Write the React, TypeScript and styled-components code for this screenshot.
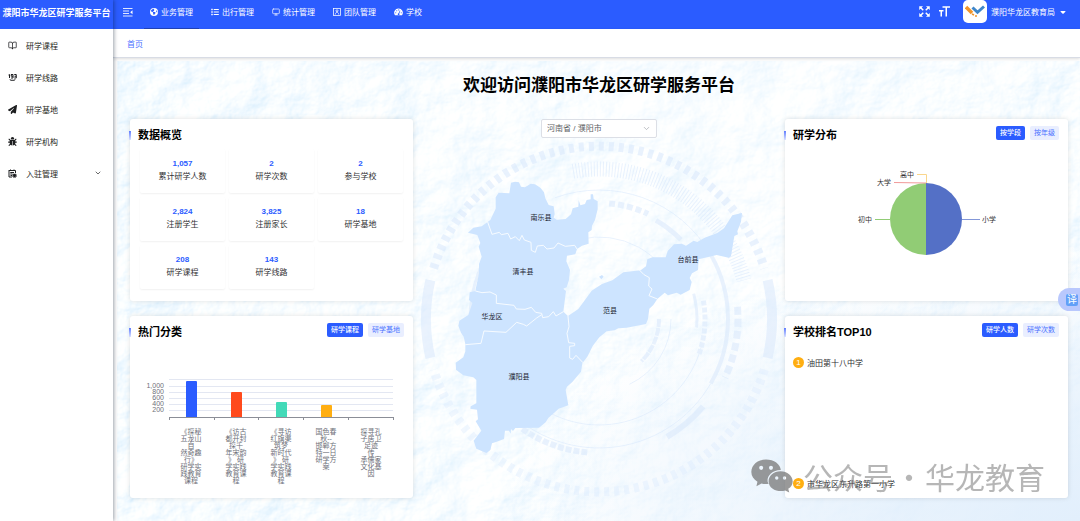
import React from 'react';
import styled, { createGlobalStyle, css } from 'styled-components';
import { BookOpen, ChevronDown, Monitor } from 'lucide-react';
import { FaBug, FaCaretDown, FaEarthAmericas, FaList, FaPaperPlane } from 'react-icons/fa6';

const BLUE = '#2b5cff';

const GlobalStyle = createGlobalStyle`
  *, *::before, *::after { box-sizing: border-box; }
  html, body { margin: 0; padding: 0; }
  body {
    font-family: "Liberation Sans", "Noto Sans CJK SC", sans-serif;
    font-size: 8px;
    color: #303133;
    background: #fff;
  }
  button, select { font-family: inherit; margin: 0; }
  h1, h2, ul, ol, dl, dd, p { margin: 0; padding: 0; list-style: none; }
  a { color: inherit; text-decoration: none; }
`;

/* ---------- frame ---------- */

const Page = styled.div`
  display: grid;
  grid-template-columns: 113px minmax(0, 1fr);
  min-height: 100vh;
`;

const Sidebar = styled.aside`
  position: relative;
  z-index: 2;
  background: #fff;
  box-shadow: 1px 0 4px rgba(0, 21, 41, 0.4);
`;

const Brand = styled.div`
  height: 29px;
  padding-bottom: 5px;
  display: flex;
  align-items: center;
  justify-content: center;
  background: ${BLUE};
  color: #fff;
  font-size: 9px;
  font-weight: 700;
  white-space: nowrap;
`;

const SideLink = styled.a`
  display: flex;
  align-items: center;
  gap: 9px;
  height: 32px;
  padding: 0 11px 0 8px;
  color: #1d1e20;
  span { flex: 1; }
`;

const Main = styled.div`
  display: flex;
  flex-direction: column;
  min-width: 0;
`;

const TopBar = styled.header`
  display: flex;
  justify-content: space-between;
  height: 29px;
  padding: 0 12px 0 10px;
  background: ${BLUE};
  color: #fff;
`;

const TopGroup = styled.div<{ $gap: number }>`
  display: flex;
  align-items: center;
  gap: ${(p) => p.$gap}px;
  height: 23px;
`;

const IconButton = styled.button`
  display: flex;
  padding: 0;
  border: 0;
  background: none;
  color: inherit;
`;

const TopNav = styled.nav`
  display: flex;
  gap: 6px;
  height: 29px;
  margin-left: 11px;
  align-self: flex-start;
`;

const TopLink = styled.a<{ $active?: boolean }>`
  display: flex;
  align-items: center;
  gap: 3px;
  padding: 0 6px 5px;
  border-bottom: 1px solid ${(p) => (p.$active ? '#2143b9' : 'transparent')};
`;

const Avatar = styled.span`
  display: flex;
  align-items: center;
  justify-content: center;
  width: 24px;
  height: 23px;
  border-radius: 5px;
  background: #fff;
`;

const UserButton = styled.button`
  display: flex;
  align-items: center;
  gap: 4px;
  margin-left: 4px;
  padding: 0 1px 0 0;
  border: 0;
  background: none;
  color: #fff;
  font-size: 8px;
`;

const Crumbs = styled.nav`
  position: relative;
  z-index: 1;
  display: flex;
  align-items: center;
  height: 29px;
  padding: 0 14px;
  background: #fff;
  color: #4a72ff;
  border-bottom: 1px solid #d8dce5;
  box-shadow: 0 1px 3px rgba(0, 0, 0, 0.14);
`;

const Board = styled.main`
  position: relative;
  flex: 1;
  margin: 3px 0 0 4px;
  padding: 12px 12px 23px 13px;
  background: #f8fbff;
  overflow: hidden;
`;

const Terrain = styled.svg`
  position: absolute;
  inset: 0;
  width: 100%;
  height: 100%;
`;

const Headline = styled.h1`
  position: relative;
  height: 46px;
  line-height: 26px;
  font-size: 17px;
  font-weight: 700;
  color: #000;
  text-align: center;
`;

const Columns = styled.div`
  position: relative;
  display: grid;
  grid-template-columns: minmax(0, 283fr) minmax(0, 372fr) minmax(0, 283fr);
`;

const Column = styled.div`
  display: flex;
  flex-direction: column;
  gap: 15px;
`;

/* ---------- cards ---------- */

const Card = styled.section`
  min-height: 182px;
  border-radius: 3px;
  background: #fff;
  box-shadow: 0 0 5px rgba(0, 0, 0, 0.12);
`;

const CardHead = styled.div`
  display: flex;
  align-items: flex-start;
  height: 30px;
  padding: 7px 9px 0 0;
`;

const CardMark = styled.span`
  width: 2px;
  height: 9px;
  margin: 5px 7px 0 -1px;
  background: linear-gradient(160deg, #5b79ff, #dfe5ff);
`;

const CardTitle = styled.h2`
  flex: 1;
  line-height: 18px;
  font-size: 11px;
  font-weight: 700;
  color: #000;
`;

const Tabs = styled.div`
  display: flex;
  gap: 5px;
`;

const Tab = styled.button<{ $on?: boolean }>`
  height: 14px;
  padding: 0 4px;
  border: 0;
  border-radius: 2px;
  line-height: 14px;
  font-size: 7px;
  ${(p) =>
    p.$on
      ? css`background: ${BLUE}; color: #fff; font-weight: 500;`
      : css`background: #e9eeff; color: #4a72ff;`}
`;

const Stats = styled.dl`
  display: grid;
  grid-template-columns: repeat(3, minmax(0, 1fr));
  gap: 4px;
  padding: 0 10px;
`;

const Stat = styled.div`
  display: flex;
  flex-direction: column-reverse;
  justify-content: flex-end;
  height: 44px;
  padding-top: 8px;
  border-radius: 2px;
  text-align: center;
  line-height: 13px;
  box-shadow: 0 1px 2px rgba(0, 0, 0, 0.06);
  dd { color: ${BLUE}; font-weight: 700; }
`;

const Chart = styled.svg`
  display: block;
  width: 100%;
  height: auto;
  font-size: 7px;
`;

const Ranks = styled.ol`
  display: flex;
  flex-direction: column;
  gap: 109px;
  padding: 10px 8px 0;
`;

const Rank = styled.li`
  display: flex;
  align-items: center;
  gap: 3px;
  height: 12px;
`;

const RankBadge = styled.span`
  width: 11px;
  height: 11px;
  border-radius: 50%;
  background: #ffae11;
  color: #fff;
  text-align: center;
  line-height: 11px;
  font-size: 8px;
`;

/* ---------- centre ---------- */

const Centre = styled.div`
  display: flex;
  flex-direction: column;
  align-items: center;
`;

const SelectWrap = styled.label`
  position: relative;
  display: block;
  width: 116px;
  height: 19px;
  svg { position: absolute; right: 6px; top: 5px; color: #a8abb2; pointer-events: none; }
`;

const Select = styled.select`
  appearance: none;
  width: 100%;
  height: 100%;
  padding: 0 16px 0 5px;
  border: 1px solid #dcdfe6;
  border-radius: 2px;
  background: #fff;
  color: #606266;
  font-size: 8px;
`;

/* ---------- floating layers ---------- */

const TranslateButton = styled.button`
  position: fixed;
  right: 0;
  top: 288px;
  z-index: 3;
  width: 22px;
  height: 23px;
  padding: 0 2px 0 8px;
  border: 0;
  border-radius: 12px 0 0 12px;
  background: #b9c8fd;
  span {
    display: block;
    height: 12px;
    border-radius: 2px;
    background: #62a0f8;
    color: #fff;
    line-height: 12px;
    font-size: 10px;
  }
`;

const Watermark = styled.div`
  position: fixed;
  right: 35px;
  bottom: 24px;
  z-index: 4;
  display: flex;
  align-items: center;
  gap: 1px;
  color: rgba(110, 110, 110, 0.5);
  font-family: "Noto Sans CJK SC", sans-serif;
  font-size: 30px;
  line-height: 42px;
  pointer-events: none;
  svg { margin-right: 9px; }
`;

/* ---------- icons ---------- */

const CollapseIcon = () => (
  <svg width="10" height="10" viewBox="0 0 10 10" stroke="#fff" fill="none" strokeWidth="1">
    <path d="M0 1.5H9.5M0 4H6M0 6.5H6M0 9H9.5" opacity=".85" />
    <path d="M9.5 3.2L7.2 5.2L9.5 7.2Z" fill="#fff" stroke="none" />
  </svg>
);

const CounterIcon = () => (
  <svg width="9" height="9" viewBox="0 0 18 18" fill="none" stroke="#1d1e20" strokeWidth="2">
    <path d="M1 4L3 3V10M6 3H10V6.5H6.5V3M10 6V10H6M12.5 3H16.5V10H12.5M13 6.5H16.5M4 12.5L5 14.500H13L14 12.500" />
  </svg>
);

const EnrolIcon = () => (
  <svg width="9" height="9" viewBox="0 0 18 18" fill="none" stroke="#1d1e20" strokeWidth="2">
    <path d="M2 3H15V8M2 2V16H8M5 1V4M12 1V4M4.500 7H12M4.500 10H9M5 13H8M10 10.500H16V16H10ZM13 10V16M10 13.200H16" />
  </svg>
);

const TeamIcon = () => (
  <svg width="8" height="8" viewBox="0 0 16 16" fill="none" stroke="#fff" strokeWidth="1.500">
    <rect x="1" y="1" width="14" height="14" />
    <circle cx="8" cy="5.500" r="2" />
    <path d="M4.500 13C5 9.500 7 8.500 8 8.500S11 9.500 11.500 13" />
  </svg>
);

const GaugeIcon = () => (
  <svg width="9" height="8" viewBox="0 0 18 16">
    <path d="M9 1A8.500 8.500 0 0 0 2 14.500H16A8.500 8.500 0 0 0 9 1Z" fill="#fff" />
    <g fill={BLUE}>
      <circle cx="3.500" cy="9.500" r="1.100" />
      <circle cx="5.500" cy="5.500" r="1.100" />
      <circle cx="9.500" cy="3.800" r="1.100" />
      <circle cx="14.500" cy="9.500" r="1.100" />
      <path d="M11.800 5L12.800 5.500L10.500 11A1.800 1.800 0 1 1 9 10.500Z" />
    </g>
  </svg>
);

const FullscreenIcon = () => (
  <svg width="11" height="11" viewBox="0 0 22 22" fill="#fff" stroke="#fff">
    <path d="M1 1H7L1 7ZM21 1V7L15 1ZM1 21V15L7 21ZM21 21H15L21 15Z" strokeWidth="1" />
    <path d="M3 3L8.500 8.500M19 3L13.500 8.500M3 19L8.500 13.500M19 19L13.500 13.500" strokeWidth="3" />
  </svg>
);

const FontSizeIcon = () => (
  <svg width="11" height="11" viewBox="0 0 22 22" fill="none" stroke="#fff" strokeWidth="3">
    <path d="M7 2H22M14.500 2V21M0 9.500H9M4.500 9.500V21" />
  </svg>
);

const LogoMark = () => (
  <svg width="20" height="13" viewBox="0 0 40 26" fill="none">
    <path d="M2 4L14 16" stroke="#f0952b" strokeWidth="7" />
    <path d="M15 5L25 14.500L38 3" stroke="#3f86c9" strokeWidth="6" />
    <path d="M14 18L18 20" stroke="#f0952b" strokeWidth="3" />
    <circle cx="22" cy="22" r="2" fill="#f0952b" />
  </svg>
);

const WeChatMark = () => (
  <svg width="42" height="34" viewBox="0 0 124 100" fill="#777" fillOpacity=".75">
    <path
      fillRule="evenodd"
      d="M44 1C68 1 87 15 88 32C64 33 47 47 49 66C50 69 51 71 52 73C46 74 37 74 31 72L16 80L19 67C8 60 1 50 1 38C1 17 20 1 44 1ZM30 20A6 6 0 1 0 30 32A6 6 0 1 0 30 20ZM59 20A6 6 0 1 0 59 32A6 6 0 1 0 59 20Z"
    />
    <path
      fillRule="evenodd"
      d="M87 36C107 36 123 49 123 66C123 76 118 83 110 88L113 99L101 93C78 99 52 87 52 66C52 49 67 36 87 36ZM76 51A5 5 0 1 0 76 61A5 5 0 1 0 76 51ZM99 51A5 5 0 1 0 99 61A5 5 0 1 0 99 51Z"
    />
  </svg>
);

/* ---------- data ---------- */

const sideItems = [
  { label: '研学课程', icon: <BookOpen size={9} strokeWidth={2} /> },
  { label: '研学线路', icon: <CounterIcon /> },
  { label: '研学基地', icon: <FaPaperPlane size={9} /> },
  { label: '研学机构', icon: <FaBug size={9} /> },
  { label: '入驻管理', icon: <EnrolIcon />, open: true },
];

const topItems = [
  { label: '业务管理', icon: <FaEarthAmericas size={8} />, active: true },
  { label: '出行管理', icon: <FaList size={8} /> },
  { label: '统计管理', icon: <Monitor size={8} strokeWidth={2} /> },
  { label: '团队管理', icon: <TeamIcon /> },
  { label: '学校', icon: <GaugeIcon /> },
];

const stats = [
  ['1,057', '累计研学人数'],
  ['2', '研学次数'],
  ['2', '参与学校'],
  ['2,824', '注册学生'],
  ['3,825', '注册家长'],
  ['18', '研学基地'],
  ['208', '研学课程'],
  ['143', '研学线路'],
];

const bars = [
  { top: 35, color: BLUE, lines: ['《探秘', '五龙山', '自', '然奇趣', '行》', '研学实', '践教育', '课程'] },
  { top: 46, color: '#ff4a1c', lines: ['《访古', '都开封', '探千', '年宋韵', '》 研', '学实践', '教育课', '程'] },
  { top: 56, color: '#42dab8', lines: ['《寻访', '红旗渠', '筑梦', '新时代', '》 研', '学实践', '教育课', '程'] },
  { top: 59, color: '#ffae11', lines: ['国色春', '秋--', '邯郸方', '特一日', '研学方', '案'] },
  { top: 71, color: BLUE, lines: ['探寻孔', '子居卫', '足迹', '传', '承儒家', '文化基', '因'] },
];

const counties = [
  { name: '南乐县', x: 128, y: 82 },
  { name: '清丰县', x: 110, y: 136 },
  { name: '华龙区', x: 79, y: 181 },
  { name: '濮阳县', x: 106, y: 241 },
  { name: '范县', x: 197, y: 175 },
  { name: '台前县', x: 275, y: 124 },
];

/* ---------- drawings ---------- */

const polar = (r: number, deg: number) => {
  const a = (deg * Math.PI) / 180;
  return `${(482 + r * Math.cos(a)).toFixed(1)} ${(258 + r * Math.sin(a)).toFixed(1)}`;
};

const arc = (r: number, from: number, to: number) =>
  `M${polar(r, from)}A${r} ${r} 0 ${to - from > 180 ? 1 : 0} 1 ${polar(r, to)}`;

const Backdrop = () => (
  <Terrain viewBox="0 0 963 460" preserveAspectRatio="xMidYMid slice" aria-hidden="true">
    <defs>
      <filter id="relief" x="0" y="0" width="100%" height="100%" colorInterpolationFilters="sRGB">
        <feTurbulence type="fractalNoise" baseFrequency="0.014 0.018" numOctaves="6" seed="4" />
        <feDiffuseLighting surfaceScale="8" lightingColor="#fff" result="lit">
          <feDistantLight azimuth="215" elevation="58" />
        </feDiffuseLighting>
        <feColorMatrix values="0.3 0 0 0 0.715  0 0.14 0 0 0.872  0 0 0.02 0 0.985  0 0 0 0 1" />
      </filter>
      <linearGradient id="veil" x1="0" y1="0" x2="1" y2="0">
        <stop offset="0" stopColor="#fff" stopOpacity="0" />
        <stop offset="0.3" stopColor="#fff" stopOpacity="0.2" />
        <stop offset="0.6" stopColor="#fff" stopOpacity="0.4" />
        <stop offset="1" stopColor="#fff" stopOpacity="0.2" />
      </linearGradient>
      <radialGradient id="glow" cx="1" cy="1" r="0.6">
        <stop offset="0" stopColor="#e2effc" />
        <stop offset="0.4" stopColor="#e4f0fc" stopOpacity="0.8" />
        <stop offset="1" stopColor="#e4f0fc" stopOpacity="0" />
      </radialGradient>
    </defs>
    <rect width="963" height="460" filter="url(#relief)" />
    <rect width="963" height="460" fill="url(#veil)" />
    <rect width="963" height="460" fill="url(#glow)" />
    <g fill="none" stroke="#d9e8fc" opacity=".55">
      <path d={arc(173, 17, 163)} strokeWidth="9" strokeDasharray="5 5" opacity=".7" />
      <path d={arc(173, 197, 343)} strokeWidth="9" strokeDasharray="5 5" />
      <path d={arc(173, -13, 13)} strokeWidth="10" />
      <path d={arc(173, 167, 193)} strokeWidth="10" />
      <path d={arc(150, 260, 345)} strokeWidth="15" strokeDasharray="1 2" />
      <path d={arc(129, 250, 330)} strokeWidth="1" />
      <path d={arc(129, 330, 390)} strokeWidth="4" />
      <path d={arc(129, 390, 500)} strokeWidth="1" />
      <path d={arc(129, 165, 215)} strokeWidth="3" />
      <path d={arc(116, 275, 295)} strokeWidth="6" strokeDasharray="6 3" />
      <path d={arc(114, 300, 316)} strokeWidth="5" />
      <path d={arc(139, -5, 25)} strokeWidth="7" strokeDasharray="8 4" />
      <path d={arc(106, -10, 20)} strokeWidth="5" strokeDasharray="5 2" />
      <path d={arc(98, -15, 5)} strokeWidth="3" />
      <path d={arc(106, 15, 130)} strokeWidth="1" />
      <path d={arc(82, 235, 320)} strokeWidth="1" />
      <path d={arc(72, 0, 65)} strokeWidth="1" />
      <path d={arc(60, 0, 45)} strokeWidth="4" strokeDasharray="8 1" />
      <path d={arc(136, 40, 60)} strokeWidth="6" />
      <path d={arc(134, 95, 125)} strokeWidth="6" strokeDasharray="6 2" />
    </g>
  </Terrain>
);

const CountyMap = () => (
  <Chart viewBox="0 0 372 350" role="img" aria-label="濮阳市地图">
    <g transform="translate(-3 -78) scale(0.33333)" fill="#cde4ff" strokeLinejoin="round">
      <path d="M303 368L315 365L327 367L333 380L345 382L362 371L375 373L391 383L402 397L406 415L416 435L431 439L434 462L431 473L440 479L467 477L483 463L488 445L505 440L506 420L511 436L525 432L530 420L542 418L542 403L549 403L551 417L563 424L563 448L555 480L546 497L545 510L535 517L536 551L516 557L501 567L496 583L471 587L469 604L480 630L477 660L470 682L460 686L468 693L460 755L474 768L505 747L545 692L576 672L607 661L640 637L672 633L692 631L708 619L712 598L727 592L767 592L773 573L792 553L815 551L828 557L851 542L862 546L884 533L922 519L942 505L967 466L996 459L993 485L982 514L984 523L973 528L963 589L956 593L920 585L866 598L864 630L846 640L839 654L845 666L839 690L812 704L800 698L774 706L764 698L742 717L730 735L718 746L714 777L708 792L650 803L625 805L614 811L590 814L568 832L548 858L532 890L517 910L513 935L494 958L487 966L471 980L467 990L475 1036L446 1046L415 1074L407 1087L387 1103L316 1104L309 1113L303 1107L302 1121L297 1112L285 1112L282 1137L258 1146L246 1150L241 1170L229 1179L199 1166L191 1142L214 1112L197 1084L204 1078L201 1049L181 1046L182 1039L199 1030L199 960L190 952L160 946L138 929L137 908L160 892L166 874L166 852L161 830L153 818L145 797L148 782L175 765L187 729L177 720L179 697L196 693L207 640L207 612L215 590L206 560L211 549L202 525L174 518L190 503L215 499L241 480L257 446L257 412L266 398L298 400Z" />
      <path d="M567 650L576 645L581 650L574 658Z" />
      <g fill="none" stroke="#f7fbff" strokeWidth="3">
        <path d="M233 486L246 523L268 517L274 524L294 520L302 537L316 530L328 542L336 526L343 540L363 547L364 571L376 577L382 558L400 556L411 567L432 564L444 549L466 559L494 556L501 567" />
        <path d="M196 693L216 698L240 696L259 705L259 730L312 736L319 747L345 748L364 742L377 757L395 760L398 773L416 770L430 755L438 768L460 755" />
        <path d="M395 764L380 774L350 798L340 793L320 787L288 817L222 813L213 850L166 854" />
        <path d="M474 768L477 800L471 820L476 848L494 850L494 857L479 859L479 894L488 898L498 886L519 908" />
        <path d="M688 630L702 644L718 653L716 678L726 687L717 707L742 717" />
      </g>
    </g>
    <g textAnchor="middle" fill="#1f2733">
      {counties.map((c) => (
        <text key={c.name} x={c.x} y={c.y}>{c.name}</text>
      ))}
    </g>
  </Chart>
);

const BarChart = () => (
  <Chart viewBox="0 0 283 148" role="img" aria-label="热门分类">
    <g stroke="#e3e7f2">
      {[33, 40, 46, 52, 58, 64].map((y) => (
        <path key={y} d={`M39 ${y}.5H263`} />
      ))}
    </g>
    <g fill="#6e7079" textAnchor="end">
      {['1,000', '800', '600', '400', '200'].map((v, i) => (
        <text key={v} x="34" y={42 + i * 6}>{v}</text>
      ))}
    </g>
    {bars.map((b, i) => (
      <g key={b.lines[0]}>
        <path d={`M${56 + i * 45} 71V${b.top + 1}q0 -1 1 -1h9q1 0 1 1V71Z`} fill={b.color} />
        <text textAnchor="middle" fill="#6e7079">
          {b.lines.map((line, n) => (
            <tspan key={n} x={61 + i * 45} y={88 + n * 7}>{line}</tspan>
          ))}
        </text>
      </g>
    ))}
    <path
      d="M39.5 74V71.5M84.500 74V71.5M128.500 74V71.5M173.500 74V71.5M218.500 74V71.5M263.500 74V71.5M39 71.5H264"
      stroke="#8b8e97"
      fill="none"
    />
  </Chart>
);

const PieChart = () => (
  <Chart viewBox="0 0 283 148" role="img" aria-label="研学分布">
    <path d="M141 34A36 36 0 0 1 141 106Z" fill="#5470c6" />
    <path d="M141 106A36 36 0 0 1 141 34Z" fill="#91cc75" />
    <g fill="none">
      <path d="M177 70.5H195" stroke="#8397d8" />
      <path d="M90 70.5H105" stroke="#91cc75" />
      <path d="M109 33.500L141 34" stroke="#f19a9a" />
      <path d="M132 25.500H141.500V34" stroke="#fad68c" />
    </g>
    <g fill="#333">
      <text x="197" y="73">小学</text>
      <text x="73" y="73">初中</text>
      <text x="92" y="36">大学</text>
      <text x="115" y="28">高中</text>
    </g>
  </Chart>
);

type PanelProps = { title: string; tabs?: string[]; children: React.ReactNode };

const Panel = ({ title, tabs, children }: PanelProps) => (
  <Card>
    <CardHead>
      <CardMark />
      <CardTitle>{title}</CardTitle>
      {tabs && (
        <Tabs>
          {tabs.map((t, i) => (
            <Tab key={t} type="button" $on={i === 0}>{t}</Tab>
          ))}
        </Tabs>
      )}
    </CardHead>
    {children}
  </Card>
);

export default function App() {
  return (
    <>
      <GlobalStyle />
      <Page>
        <Sidebar>
          <Brand>濮阳市华龙区研学服务平台</Brand>
          <ul>
            {sideItems.map((s) => (
              <li key={s.label}>
                <SideLink href="#">
                  {s.icon}
                  <span>{s.label}</span>
                  {s.open && <ChevronDown size={8} />}
                </SideLink>
              </li>
            ))}
          </ul>
        </Sidebar>
        <Main>
          <TopBar>
            <TopGroup $gap={0}>
              <IconButton type="button" aria-label="折叠菜单"><CollapseIcon /></IconButton>
              <TopNav>
                {topItems.map((t) => (
                  <TopLink key={t.label} href="#" $active={t.active}>
                    {t.icon}
                    {t.label}
                  </TopLink>
                ))}
              </TopNav>
            </TopGroup>
            <TopGroup $gap={9}>
              <IconButton type="button" aria-label="全屏"><FullscreenIcon /></IconButton>
              <IconButton type="button" aria-label="字号"><FontSizeIcon /></IconButton>
              <UserButton type="button">
                <Avatar><LogoMark /></Avatar>
                濮阳华龙区教育局
                <FaCaretDown size={8} />
              </UserButton>
            </TopGroup>
          </TopBar>
          <Crumbs><a href="#">首页</a></Crumbs>
          <Board>
            <Backdrop />
            <Headline>欢迎访问濮阳市华龙区研学服务平台</Headline>
            <Columns>
              <Column>
                <Panel title="数据概览">
                  <Stats>
                    {stats.map(([value, label]) => (
                      <Stat key={label}>
                        <dt>{label}</dt>
                        <dd>{value}</dd>
                      </Stat>
                    ))}
                  </Stats>
                </Panel>
                <Panel title="热门分类" tabs={['研学课程', '研学基地']}>
                  <BarChart />
                </Panel>
              </Column>
              <Centre>
                <SelectWrap>
                  <Select aria-label="地区" defaultValue="puyang">
                    <option value="puyang">河南省 / 濮阳市</option>
                  </Select>
                  <ChevronDown size={9} strokeWidth={2} />
                </SelectWrap>
                <CountyMap />
              </Centre>
              <Column>
                <Panel title="研学分布" tabs={['按学段', '按年级']}>
                  <PieChart />
                </Panel>
                <Panel title="学校排名TOP10" tabs={['研学人数', '研学次数']}>
                  <Ranks>
                    <Rank><RankBadge>1</RankBadge>油田第十八中学</Rank>
                    <Rank><RankBadge>2</RankBadge>市华龙区东升路第一小学</Rank>
                  </Ranks>
                </Panel>
              </Column>
            </Columns>
          </Board>
        </Main>
      </Page>
      <TranslateButton type="button" aria-label="翻译"><span>译</span></TranslateButton>
      <Watermark>
        <WeChatMark />
        <span>公众号</span>
        <span>·</span>
        <span>华龙教育</span>
      </Watermark>
    </>
  );
}
